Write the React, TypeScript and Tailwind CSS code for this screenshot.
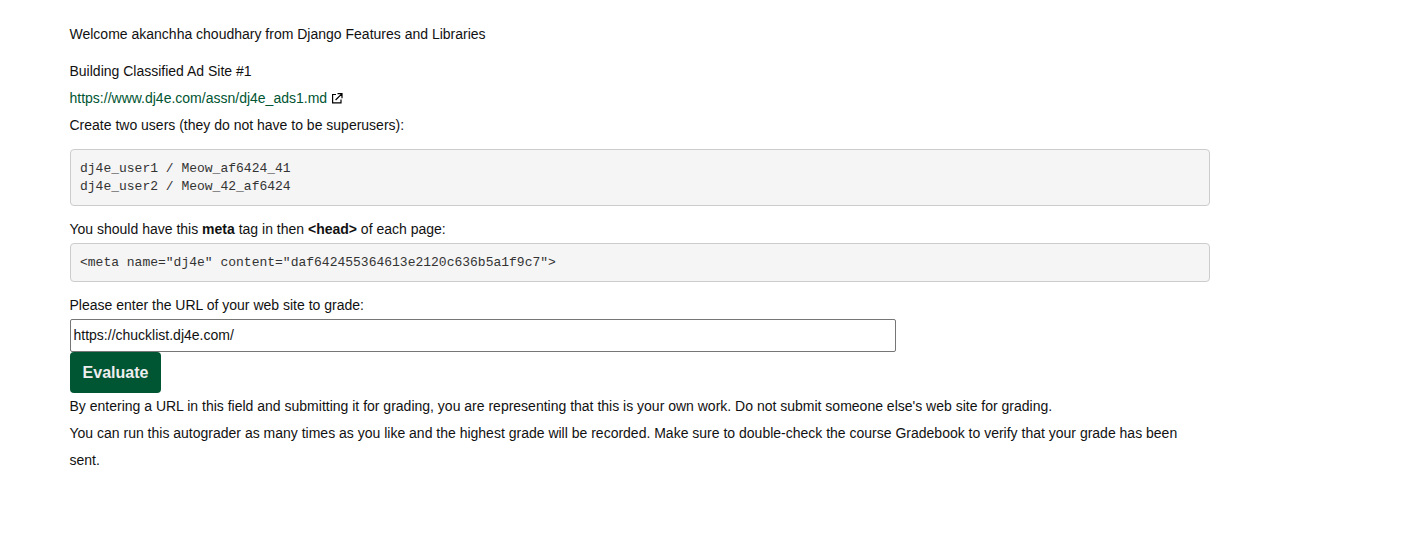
export default function App() {
  return (
    <main className="min-h-[557px] bg-white pl-[69.5px] pt-[21px] font-['Liberation_Sans',Arial,sans-serif] text-[14px] leading-[27px] text-[#111111]">
      <div className="w-[1140px]">
        <p className="mb-[10px]">Welcome akanchha choudhary from Django Features and Libraries</p>
        <p>Building Classified Ad Site #1</p>
        <p className="flex items-center">
          <a href="#" className="flex items-center text-[#005532]">
            https://www.dj4e.com/assn/dj4e_ads1.md
            <svg className="ml-[5px] text-black" width="11" height="11" viewBox="0 0 11 11" fill="none" stroke="currentColor" strokeWidth="1.2">
              <path d="M4 1.5H0.6V9.9H9V6.5M5.5 0.6H10V5.2M9.8 0.8L3.6 7" />
            </svg>
          </a>
        </p>
        <p>Create two users (they do not have to be superusers):</p>
        <pre className="mb-[10px] mt-[10px] h-[57px] rounded-[4px] border border-[#cccccc] bg-[#f5f5f5] px-[9.5px] pt-[9.5px] font-['Liberation_Mono',monospace] text-[13px] leading-[18px] text-[#333333]">{`dj4e_user1 / Meow_af6424_41
dj4e_user2 / Meow_42_af6424`}</pre>
        <p>You should have this <b>meta</b> tag in then <b>&lt;head&gt;</b> of each page:</p>
        <pre className="mb-[10px] h-[39px] rounded-[4px] border border-[#cccccc] bg-[#f5f5f5] px-[9.5px] pt-[9.5px] font-['Liberation_Mono',monospace] text-[13px] leading-[18px] text-[#333333]">{`<meta name="dj4e" content="daf642455364613e2120c636b5a1f9c7">`}</pre>
        <form onSubmit={(e) => e.preventDefault()}>
          <label htmlFor="url" className="block">Please enter the URL of your web site to grade:</label>
          <input id="url" defaultValue="https://chucklist.dj4e.com/" className="block h-[33px] w-[826px] rounded-[2px] border border-[#767676] bg-white px-[3px] pb-[2px] text-[14px] text-[#111111]" />
          <button className="block h-[41px] w-[91px] rounded-[4px] bg-[#005532] pl-px text-[16px] font-bold leading-[24px] text-[#eeeeee]">Evaluate</button>
        </form>
        <p>By entering a URL in this field and submitting it for grading, you are representing that this is your own work. Do not submit someone else's web site for grading.</p>
        <p>You can run this autograder as many times as you like and the highest grade will be recorded. Make sure to double-check the course Gradebook to verify that your grade has been sent.</p>
      </div>
    </main>
  );
}
